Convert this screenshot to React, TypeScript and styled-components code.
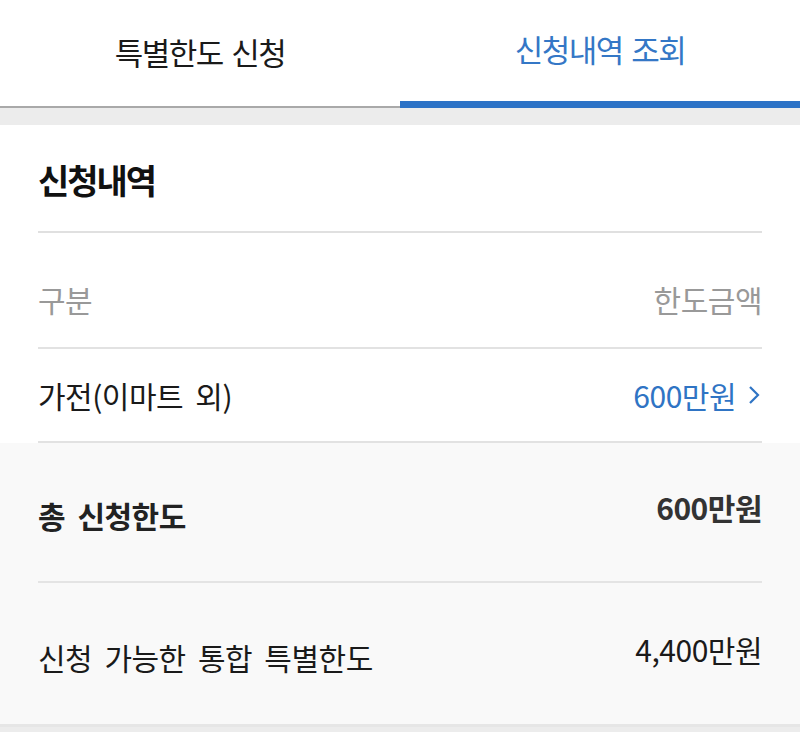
import React, { FC } from 'react'
import styled, { createGlobalStyle } from 'styled-components'

const GlobalStyle = createGlobalStyle`
  html, body {
    margin: 0;
    padding: 0;
    background: #ececec;
  }
  body {
    font-family: "Noto Sans CJK KR", "Noto Sans", sans-serif;
    color: #1a1a1a;
  }
`

const Page = styled.div`
  width: 800px;
  min-height: 732px;
  background: #ececec;
`

const Tabs = styled.nav`
  display: flex;
  height: 108px;
  background: #fff;
`

const Tab = styled.div<{ $active?: boolean }>`
  flex: 1;
  display: flex;
  align-items: center;
  justify-content: center;
  padding-bottom: 4px;
  box-sizing: border-box;
  font-size: 31px;
  letter-spacing: -1.5px;
  word-spacing: 3px;
  color: ${p => (p.$active ? '#3477c6' : '#1a1a1a')};
  border-bottom: ${p => (p.$active ? '7px solid #2c72c6' : '2px solid #a9a9a9')};
`

const Section = styled.section`
  margin-top: 17px;
  background: #fff;
  padding: 0 38px;
`

const Title = styled.h2`
  margin: 0;
  height: 108px;
  display: flex;
  align-items: center;
  padding-top: 2px;
  box-sizing: border-box;
  font-size: 34px;
  font-weight: 700;
  letter-spacing: -2px;
  color: #111;
  border-bottom: 2px solid #e0e0e0;
`

const Row = styled.div<{ $height: number; $padTop?: number }>`
  display: flex;
  align-items: center;
  justify-content: space-between;
  height: ${p => p.$height}px;
  padding-top: ${p => p.$padTop ?? 0}px;
  box-sizing: border-box;
  border-bottom: 2px solid #e2e2e2;
  font-size: 30px;
  letter-spacing: -0.5px;
  word-spacing: 6px;
`

const Head = styled.span`
  color: #999;
`

const Label = styled.span`
  color: #1a1a1a;
`

const LinkValue = styled.span`
  display: flex;
  align-items: center;
  gap: 12px;
  color: #2f74c4;
`

const Chevron = styled.svg`
  width: 12px;
  height: 20px;
  margin-right: 2px;
`

const Summary = styled.section`
  background: #f9f9f9;
  padding: 0 38px;
  border-bottom: 3px solid #e6e6e6;
`

const SumRow = styled.div<{ $height: number; $last?: boolean }>`
  display: flex;
  justify-content: space-between;
  align-items: center;
  height: ${p => p.$height}px;
  box-sizing: border-box;
  border-bottom: ${p => (p.$last ? 'none' : '2px solid #e4e4e4')};
  font-size: 30px;
  letter-spacing: -0.5px;
  word-spacing: 6px;
`

const SumLabel = styled.span<{ $bold?: boolean }>`
  font-weight: ${p => (p.$bold ? 700 : 400)};
  color: ${p => (p.$bold ? '#222' : '#1a1a1a')};
  padding-top: 6px;
`

const SumValue = styled.span<{ $bold?: boolean }>`
  font-weight: ${p => (p.$bold ? 700 : 400)};
  color: ${p => (p.$bold ? '#333' : '#1a1a1a')};
  padding-bottom: 10px;
`

type Item = {
  name: string
  amount: string
}

const items: Item[] = [{ name: '가전(이마트 외)', amount: '600만원' }]

const App: FC = () => {
  return (
    <Page>
      <GlobalStyle />
      <Tabs>
        <Tab>특별한도 신청</Tab>
        <Tab $active>신청내역 조회</Tab>
      </Tabs>
      <Section>
        <Title>신청내역</Title>
        <Row $height={116} $padTop={18}>
          <Head>구분</Head>
          <Head>한도금액</Head>
        </Row>
        {items.map((el, index) => (
          <Row key={index} $height={94}>
            <Label>{el.name}</Label>
            <LinkValue>
              {el.amount}
              <Chevron viewBox="0 0 12 20">
                <path d="M2 2 L10 10 L2 18" fill="none" stroke="#2f74c4" strokeWidth="2.2" />
              </Chevron>
            </LinkValue>
          </Row>
        ))}
      </Section>
      <Summary>
        <SumRow $height={140}>
          <SumLabel $bold>총 신청한도</SumLabel>
          <SumValue $bold>600만원</SumValue>
        </SumRow>
        <SumRow $height={141} $last>
          <SumLabel>신청 가능한 통합 특별한도</SumLabel>
          <SumValue>4,400만원</SumValue>
        </SumRow>
      </Summary>
    </Page>
  )
}

export default App
